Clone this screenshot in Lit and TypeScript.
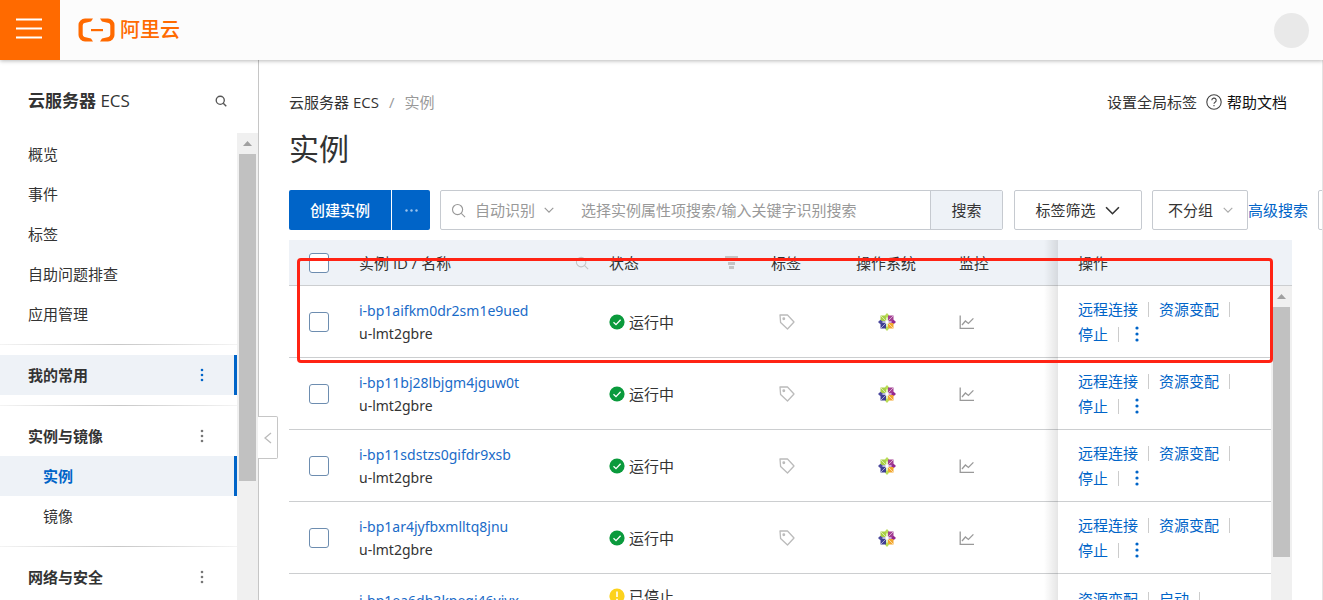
import { LitElement, html, css, svg, nothing } from "lit";
import { customElement, state } from "lit/decorators.js";
import { classMap } from "lit/directives/class-map.js";

interface Instance {
  id: string;
  name: string;
  running: boolean;
  actions: string[];
}

interface NavItem {
  label: string;
  child?: boolean;
  heading?: boolean;
  active?: boolean;
}

const RUNNING_ACTIONS = ["远程连接", "资源变配", "停止"];

const INSTANCES: Instance[] = [
  { id: "i-bp1aifkm0dr2sm1e9ued", name: "u-lmt2gbre", running: true, actions: RUNNING_ACTIONS },
  { id: "i-bp11bj28lbjgm4jguw0t", name: "u-lmt2gbre", running: true, actions: RUNNING_ACTIONS },
  { id: "i-bp11sdstzs0gifdr9xsb", name: "u-lmt2gbre", running: true, actions: RUNNING_ACTIONS },
  { id: "i-bp1ar4jyfbxmlltq8jnu", name: "u-lmt2gbre", running: true, actions: RUNNING_ACTIONS },
  { id: "i-bp1ea6dh3kpegj46yjyx", name: "u-lmt2gbre", running: false, actions: ["资源变配", "启动"] },
];

const NAV: NavItem[][] = [
  [{ label: "概览" }, { label: "事件" }, { label: "标签" }, { label: "自助问题排查" }, { label: "应用管理" }],
  [{ label: "我的常用", heading: true, active: true }],
  [
    { label: "实例与镜像", heading: true },
    { label: "实例", child: true, active: true },
    { label: "镜像", child: true },
  ],
  [{ label: "网络与安全", heading: true }],
];

const searchIcon = (size: number, width = 1.2) => html`<svg width=${size} height=${size} viewBox="0 0 16 16" fill="none" stroke="currentColor" stroke-width=${width} aria-hidden="true">
  <circle cx="7" cy="7" r="5.4" /><path d="M11 11l4 4" />
</svg>`;

const chevron = (w: number, h: number, width: number) => html`<svg width=${w} height=${h} viewBox="0 0 14 8" fill="none" stroke="currentColor" stroke-width=${width} aria-hidden="true">
  <path d="M1 1l6 6 6-6" />
</svg>`;

const dots = (r: number, size: number) => html`<svg width="4" height=${size} viewBox="0 0 4 ${size}" fill="currentColor" aria-hidden="true">
  <circle cx="2" cy="2" r=${r} /><circle cx="2" cy=${size / 2} r=${r} /><circle cx="2" cy=${size - 2} r=${r} />
</svg>`;

const filterIcon = html`<svg width="13" height="14" viewBox="0 0 13 14" fill="currentColor" aria-hidden="true">
  <path d="M0 0h13v4l-1 1H1L0 4zM3 6h7v3H3zM4 10h5v3H4z" />
</svg>`;

const tagIcon = html`<svg width="16" height="16" viewBox="0 0 16 16" fill="none" stroke="#bbb" stroke-width="1.3" stroke-linejoin="round" aria-hidden="true">
  <path d="M1 1h7.500L15 8l-6.500 7L1.600 8.600z" /><circle cx="4.800" cy="4.800" r=".8" />
</svg>`;

const chartIcon = html`<svg width="16" height="16" viewBox="0 0 16 16" fill="none" stroke="#999" stroke-width="1.3" aria-hidden="true">
  <path d="M1.200 1.500v12.800H15" /><path d="M3 11l3.400-4 3 2.400 5-5" />
</svg>`;

const centosIcon = html`<svg width="20" height="20" viewBox="0 0 20 20" aria-hidden="true">
  ${[
    ["#a8cf45", "#b9dc55", 0],
    ["#a33f93", "#93278f", 90],
    ["#f2a72e", "#b9dc55", 180],
    ["#3f3e93", "#4c4a9e", 270],
  ].map(
    ([color, tip, angle]) => svg`<g transform="rotate(${angle} 10 10)">
      <path d="M3.500 3.500h5.500v5.500H3.500z" fill=${color} />
      <path d="M10 1l2.200 2.400L10 6 7.800 3.400z" fill=${tip} />
      <path d="M4 4l5 5" stroke="#fff" stroke-width=".7" opacity=".8" />
      <path d="M10 4v4.500" stroke=${tip} stroke-width=".8" />
    </g>`,
  )}
</svg>`;

const okIcon = html`<svg width="16" height="16" viewBox="0 0 16 16" aria-hidden="true">
  <circle cx="8" cy="8" r="7.600" fill="#0a9a3c" /><path d="M4.500 8.200l2.500 2.400 4.600-4.800" fill="none" stroke="#fff" stroke-width="1.300" />
</svg>`;

const warnIcon = html`<svg width="16" height="16" viewBox="0 0 16 16" aria-hidden="true">
  <circle cx="8" cy="8" r="7.600" fill="#fcd21c" /><path d="M8 3.600v5.400M8 10.800v1.600" stroke="#fff" stroke-width="1.600" />
</svg>`;

const base = css`
  :host {
    box-sizing: border-box;
    font: 15px/22px "Open Sans", "Noto Sans CJK SC", sans-serif;
    color: #333;
  }
  * {
    box-sizing: border-box;
  }
  svg {
    display: block;
    flex: none;
  }
  button,
  input,
  select {
    font: inherit;
    color: inherit;
    margin: 0;
    padding: 0;
    border: 0;
    background: none;
    border-radius: 0;
  }
  a {
    color: inherit;
    text-decoration: none;
  }
`;

@customElement("scroll-rail")
export class ScrollRail extends LitElement {
  static properties = { ratio: { type: Number } };
  declare ratio: number;

  static styles = css`
    :host {
      display: flex;
      flex-direction: column;
      width: 21px;
      padding: 0 2px;
      box-sizing: border-box;
      background: #f0f0f0;
    }
    .arrow {
      height: 21px;
      flex: none;
      display: grid;
      place-items: center;
      color: #a0a0a0;
    }
    .track {
      flex: 1;
      min-height: 0;
    }
    .thumb {
      background: #c1c1c1;
    }
  `;

  render() {
    return html`<div class="arrow">
        <svg width="9" height="5" viewBox="0 0 9 5" fill="currentColor"><path d="M4.500 0L9 5H0z" /></svg>
      </div>
      <div class="track"><div class="thumb" style="height:${this.ratio}%"></div></div>`;
  }
}

@customElement("side-nav")
export class SideNav extends LitElement {
  static styles = [
    base,
    css`
      :host {
        position: relative;
        display: flex;
        flex-direction: column;
        width: 259px;
        flex: none;
        border-right: 1px solid #c6c6c6;
      }
      .title {
        display: flex;
        align-items: center;
        justify-content: space-between;
        height: 73px;
        padding: 8px 31px 0 28px;
        flex: none;
      }
      .title h2 {
        margin: 0;
        font-size: 17px;
        font-weight: 700;
      }
      .latin {
        font-weight: 400;
      }
      .title button {
        color: #555;
      }
      .body {
        display: flex;
        flex: 1;
        min-height: 0;
      }
      nav {
        flex: 1;
        overflow: hidden;
        padding-top: 1px;
      }
      ul {
        list-style: none;
        margin: 0;
        padding: 0;
      }
      .divider {
        height: 1px;
        border: 0;
        margin: 10px 0;
        background: linear-gradient(90deg, #f4f4f4, #c8c8c8 50%, #f4f4f4);
      }
      li {
        display: flex;
        align-items: center;
        justify-content: space-between;
        height: 40px;
        padding: 0 30px 0 28px;
        border-right: 3px solid transparent;
      }
      .heading {
        font-weight: 700;
      }
      .child {
        padding-left: 43px;
      }
      .active {
        background: #eef2f7;
        border-right-color: #0064c8;
      }
      .child.active {
        color: #0064c8;
        font-weight: 700;
      }
      .more {
        color: #777;
      }
      .active .more {
        color: #0064c8;
      }
      .collapse {
        position: absolute;
        left: 100%;
        top: 356px;
        width: 20px;
        height: 43px;
        display: grid;
        place-items: center;
        background: #fff;
        border: 1px solid #c6c6c6;
        border-left: 0;
        border-radius: 0 2px 2px 0;
        color: #bbb;
      }
    `,
  ];

  render() {
    return html`<div class="title">
        <h2>云服务器 <span class="latin">ECS</span></h2>
        <button aria-label="搜索">${searchIcon(12, 1.8)}</button>
      </div>
      <div class="body">
        <nav>
          ${NAV.map(
            (group, i) => html`${i ? html`<hr class="divider" />` : nothing}
              <ul>
                ${group.map(
                  (item) => html`<li
                    class=${classMap({ heading: !!item.heading, child: !!item.child, active: !!item.active })}
                  >
                    <a href="#">${item.label}</a>
                    ${item.heading ? html`<button class="more" aria-label="更多">${dots(1.3, 14)}</button>` : nothing}
                  </li>`,
                )}
              </ul>`,
          )}
        </nav>
        <scroll-rail .ratio=${73.3}></scroll-rail>
      </div>
      <button class="collapse" aria-label="收起">
        <svg width="8" height="12" viewBox="0 0 8 12" fill="none" stroke="currentColor" stroke-width="1.300">
          <path d="M7 1L1 6l6 5" />
        </svg>
      </button>`;
  }
}

@customElement("instance-table")
export class InstanceTable extends LitElement {
  @state() private selected = new Set<string>();

  static styles = [
    base,
    css`
      :host {
        position: relative;
        display: block;
        flex: 1;
        min-height: 0;
      }
      .clip {
        height: 100%;
        overflow: hidden;
      }
      table {
        width: 100%;
        table-layout: fixed;
        border-collapse: separate;
        border-spacing: 0;
      }
      .c-check {
        width: 50px;
      }
      .c-status {
        width: 162px;
      }
      .c-tag {
        width: 85px;
      }
      .c-os {
        width: 103px;
      }
      .c-mon {
        width: 119px;
      }
      .c-ops {
        width: 234px;
      }
      th,
      td {
        padding: 0 0 0 20px;
        text-align: left;
        font-weight: 400;
        border-bottom: 1px solid #ccced0;
        white-space: nowrap;
      }
      th {
        height: 46px;
        background: #eef2f7;
      }
      td {
        height: 72px;
      }
      .stopped td {
        height: 76px;
      }
      .head {
        display: flex;
        align-items: center;
        justify-content: space-between;
        color: #333;
      }
      .head svg {
        color: #c4c4c4;
      }
      .status .head {
        padding-right: 13px;
      }
      .center {
        padding: 0 34px 0 20px;
      }
      .os {
        padding: 0 22px 0 20px;
      }
      .center svg,
      .os svg {
        margin: 0 auto;
      }
      input {
        appearance: none;
        display: block;
        width: 20px;
        height: 20px;
        border: 1px solid #6d8db0;
        border-radius: 3px;
        background: #fff;
      }
      input:checked {
        background: #0064c8;
      }
      .link {
        color: #1a6bc8;
      }
      .latin {
        font-family: "Noto Sans", "Open Sans", sans-serif;
        font-size: 14px;
        line-height: 23px;
      }
      .latin a,
      .latin span {
        display: block;
      }
      .state {
        display: flex;
        align-items: center;
        gap: 4px;
      }
      .stopped .status {
        vertical-align: top;
        padding-top: 11px;
      }
      .ops {
        position: relative;
      }
      .ops::before {
        content: "";
        position: absolute;
        top: 0;
        bottom: -1px;
        right: 100%;
        width: 14px;
        background: linear-gradient(90deg, rgba(0, 0, 0, 0), rgba(0, 0, 0, 0.1));
      }
      .actions {
        display: flex;
        flex-wrap: wrap;
        align-items: center;
        width: 180px;
        line-height: 25px;
        color: #0064c8;
      }
      .stopped .actions {
        width: 140px;
      }
      .actions a {
        display: flex;
        align-items: center;
      }
      .actions a::after {
        content: "";
        width: 1px;
        height: 15px;
        margin: 0 10px;
        background: #ccc;
      }
      .actions button {
        padding: 0 6px;
        line-height: 25px;
        height: 25px;
      }
      .rail {
        position: absolute;
        top: 46px;
        right: 0;
        bottom: 0;
      }
      .callout {
        position: absolute;
        top: 18px;
        left: 8px;
        right: 19px;
        height: 105px;
        border: 3px solid #ff2314;
        border-radius: 4px;
        pointer-events: none;
      }
    `,
  ];

  private toggle(id: string) {
    const next = new Set(this.selected);
    next.has(id) ? next.delete(id) : next.add(id);
    this.selected = next;
  }

  private toggleAll() {
    this.selected = this.selected.size === INSTANCES.length ? new Set() : new Set(INSTANCES.map((i) => i.id));
  }

  private row(item: Instance) {
    return html`<tr class=${item.running ? "" : "stopped"}>
      <td>
        <input
          type="checkbox"
          aria-label=${item.id}
          .checked=${this.selected.has(item.id)}
          @change=${() => this.toggle(item.id)}
        />
      </td>
      <td class="latin"><a class="link" href="#">${item.id}</a><span>${item.name}</span></td>
      <td class="status">
        <div class="state">${item.running ? okIcon : warnIcon}${item.running ? "运行中" : "已停止"}</div>
      </td>
      <td class="center">${tagIcon}</td>
      <td class="os">${centosIcon}</td>
      <td>${chartIcon}</td>
      <td class="ops">
        <div class="actions">
          ${item.actions.map((a) => html`<a href="#">${a}</a>`)}
          <button aria-label="更多">${dots(1.6, 16)}</button>
        </div>
      </td>
    </tr>`;
  }

  render() {
    return html`<div class="clip">
        <table>
          <colgroup>
            <col class="c-check" />
            <col />
            <col class="c-status" />
            <col class="c-tag" />
            <col class="c-os" />
            <col class="c-mon" />
            <col class="c-ops" />
          </colgroup>
          <thead>
            <tr>
              <th>
                <input
                  type="checkbox"
                  aria-label="全选"
                  .checked=${this.selected.size === INSTANCES.length}
                  @change=${this.toggleAll}
                />
              </th>
              <th class="id"><div class="head">实例 ID / 名称 ${searchIcon(14, 1.2)}</div></th>
              <th class="status"><div class="head">状态 ${filterIcon}</div></th>
              <th>标签</th>
              <th>操作系统</th>
              <th>监控</th>
              <th class="ops">操作</th>
            </tr>
          </thead>
          <tbody>
            ${INSTANCES.map((i) => this.row(i))}
          </tbody>
        </table>
      </div>
      <scroll-rail class="rail" .ratio=${85.3}></scroll-rail>
      <div class="callout"></div>`;
  }
}

@customElement("app-root")
export class AppRoot extends LitElement {
  static styles = [
    base,
    css`
      :host {
        display: flex;
        flex-direction: column;
        height: 100vh;
        overflow: hidden;
        background: #fff;
      }
      header {
        position: relative;
        z-index: 1;
        display: flex;
        align-items: center;
        height: 60px;
        flex: none;
        padding-right: 14px;
        background: #fcfcfc;
        box-shadow: 0 1px 4px rgba(0, 0, 0, 0.28);
      }
      .menu {
        width: 60px;
        height: 60px;
        display: grid;
        place-items: center;
        background: #ff6a00;
        padding-right: 2px;
        padding-bottom: 3px;
      }
      .brand {
        display: flex;
        align-items: center;
        gap: 5px;
        margin-left: 18px;
        color: #ff6a00;
        font-size: 20px;
        font-weight: 500;
      }
      .avatar {
        width: 35px;
        height: 35px;
        margin-left: auto;
        border-radius: 50%;
        background: #e9e9e9;
      }
      .page {
        display: flex;
        flex: 1;
        min-height: 0;
      }
      main {
        display: flex;
        flex-direction: column;
        flex: 1;
        min-width: 0;
        overflow: hidden;
        padding: 31px 30px 0;
        border-right: 1px solid #e4e4e4;
      }
      .top {
        display: flex;
        justify-content: space-between;
        padding-right: 5px;
      }
      .crumbs,
      .help {
        display: flex;
        align-items: center;
      }
      .crumbs {
        gap: 10px;
      }
      .muted {
        color: #999;
      }
      .help {
        gap: 9px;
      }
      .doc {
        display: flex;
        align-items: center;
        gap: 5px;
        color: #111;
      }
      h1 {
        margin: 15px 0 20px;
        font-size: 30px;
        line-height: 42px;
        font-weight: 400;
      }
      .tools {
        display: flex;
        height: 40px;
        flex: none;
        margin: 0 -66px 10px 0;
      }
      .create,
      .extra {
        display: grid;
        place-items: center;
        background: #0064c8;
        color: #fff;
      }
      .create {
        width: 102px;
        border-radius: 2px 0 0 2px;
        margin-right: 1px;
        font-weight: 500;
      }
      .extra {
        width: 38px;
        border-radius: 0 2px 2px 0;
        margin-right: 10px;
      }
      .box {
        display: flex;
        align-items: center;
        border: 1px solid #c6cad0;
        border-radius: 2px;
        background: #fff;
      }
      .search {
        flex: 1;
        color: #999;
        margin-right: 11px;
        padding-left: 10px;
      }
      select {
        appearance: none;
      }
      .kind {
        width: 60px;
        margin: 0 9px;
      }
      .search input {
        flex: 1;
        min-width: 0;
        height: 100%;
        margin-left: 27px;
        outline: 0;
      }
      .search input::placeholder {
        color: #999;
        opacity: 1;
      }
      .go {
        width: 72px;
        height: 100%;
        border-left: 1px solid #c6cad0;
        background: #eef2f7;
        color: #333;
      }
      .tags {
        width: 128px;
        justify-content: center;
        gap: 10px;
        margin-right: 10px;
      }
      .group {
        width: 96px;
        padding-left: 15px;
        gap: 10px;
      }
      .group select {
        width: 45px;
      }
      .group svg {
        color: #aaa;
      }
      .adv {
        align-self: center;
        color: #0064c8;
        margin-right: 10px;
      }
      .square {
        width: 40px;
      }
    `,
  ];

  render() {
    return html`<header>
        <button class="menu" aria-label="菜单">
          <svg width="26" height="21" viewBox="0 0 26 21" stroke="#fff" stroke-width="2">
            <path d="M0 1.500h26M0 10.500h26M0 19.500h26" />
          </svg>
        </button>
        <a class="brand" href="#">
          <svg width="37" height="24" viewBox="0 0 37 24" fill="currentColor" aria-hidden="true">
            <path d="M15 .500H7A6.500 6.500 0 0 0 .500 7v10A6.500 6.500 0 0 0 7 23.500h8L13 20.500l-6.500-1.500a2.500 2.500 0 0 1-1.800-2.400V7.400A2.500 2.500 0 0 1 6.500 5L13 3.500z" />
            <path d="M22 .500h8A6.500 6.500 0 0 1 36.500 7v10a6.500 6.500 0 0 1-6.500 6.500h-8L24 20.500l6.500-1.500a2.500 2.500 0 0 0 1.800-2.400V7.400A2.500 2.500 0 0 0 30.500 5L24 3.500z" />
            <path d="M13 11h12v2.200H13z" />
          </svg>
          阿里云
        </a>
        <div class="avatar"></div>
      </header>
      <div class="page">
        <side-nav></side-nav>
        <main>
          <div class="top">
            <div class="crumbs"><a href="#">云服务器 ECS</a><span class="muted">/</span><span class="muted">实例</span></div>
            <div class="help">
              <a href="#">设置全局标签</a>
              <a class="doc" href="#">
                <svg width="16" height="16" viewBox="0 0 16 16" fill="none" stroke="#444" stroke-width="1.100" aria-hidden="true">
                  <circle cx="8" cy="8" r="7.200" />
                  <path d="M5.800 6.300a2.200 2.200 0 1 1 3.300 1.900c-.8.500-1.100.8-1.100 1.600M8 11v1.300" />
                </svg>
                帮助文档
              </a>
            </div>
          </div>
          <h1>实例</h1>
          <div class="tools">
            <button class="create">创建实例</button>
            <button class="extra" aria-label="更多">
              <svg width="13" height="3" viewBox="0 0 13 3" fill="#9cc3ec">
                <circle cx="1.500" cy="1.500" r="1.200" /><circle cx="6.500" cy="1.500" r="1.200" /><circle cx="11.500" cy="1.500" r="1.200" />
              </svg>
            </button>
            <div class="box search">
              ${searchIcon(15, 1.2)}
              <select class="kind" aria-label="识别方式"><option>自动识别</option></select>
              ${chevron(10, 6, 1.6)}
              <input type="text" aria-label="搜索实例" placeholder="选择实例属性项搜索/输入关键字识别搜索" />
              <button class="go">搜索</button>
            </div>
            <button class="box tags">标签筛选 ${chevron(15, 9, 1.5)}</button>
            <div class="box group">
              <select aria-label="分组"><option>不分组</option></select>
              ${chevron(10, 6, 1.6)}
            </div>
            <a class="adv" href="#">高级搜索</a>
            <button class="box square" aria-label="设置"></button>
          </div>
          <instance-table></instance-table>
        </main>
      </div>`;
  }
}
